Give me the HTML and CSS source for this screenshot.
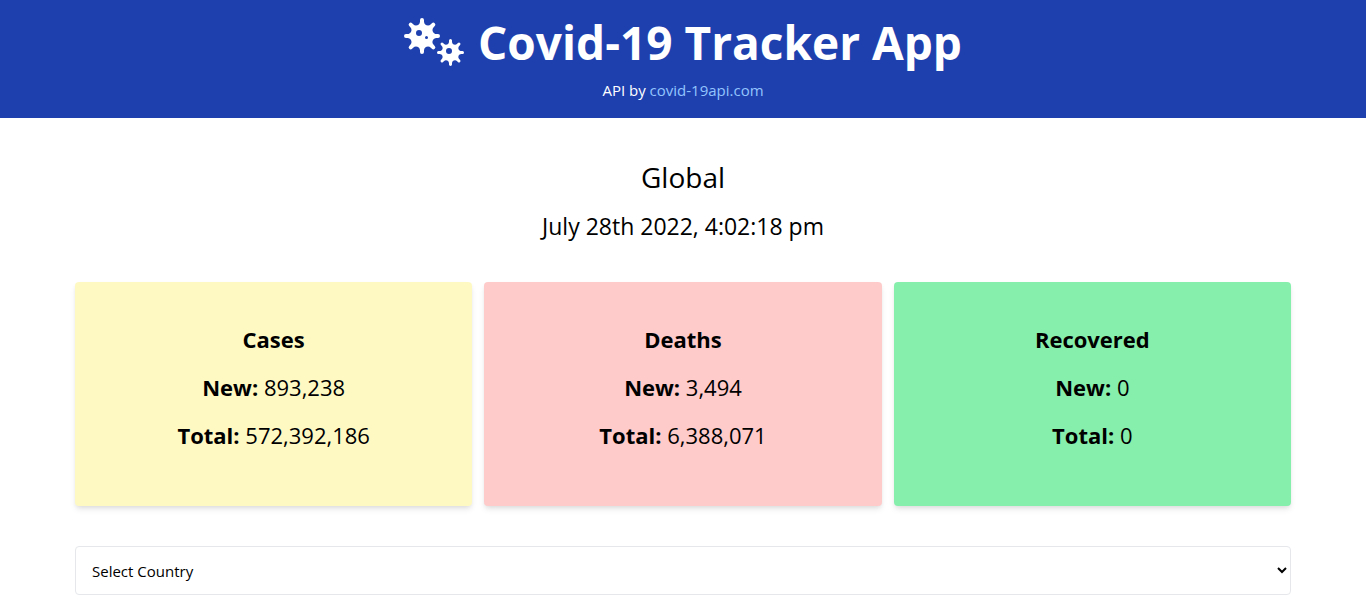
FILE: index.html
```html
<!DOCTYPE html>
<html lang="en">
<head>
<meta charset="utf-8">
<meta name="viewport" content="width=device-width, initial-scale=1">
<title>Covid-19 Tracker App</title>
<link rel="stylesheet" href="styles.css">
</head>
<body>
<header class="header">
  <h1 class="title">
    <svg class="title-icon" viewBox="0 0 640 512" aria-hidden="true"><path fill="currentColor" d="M624,352H611.88c-28.51,0-42.79-34.47-22.63-54.63l8.58-8.57a16,16,0,1,0-22.63-22.63l-8.57,8.58C546.47,294.91,512,280.63,512,252.12V240a16,16,0,0,0-32,0v12.12c0,28.51-34.47,42.79-54.63,22.63l-8.57-8.58a16,16,0,0,0-22.63,22.63l8.58,8.57c20.16,20.16,5.88,54.63-22.63,54.63H368a16,16,0,0,0,0,32h12.12c28.51,0,42.79,34.47,22.63,54.63l-8.58,8.57a16,16,0,1,0,22.63,22.63l8.57-8.58c20.16-20.16,54.63-5.88,54.63,22.63V496a16,16,0,0,0,32,0V483.88c0-28.51,34.47-42.79,54.63-22.63l8.57,8.58a16,16,0,1,0,22.63-22.63l-8.58-8.57C569.09,418.47,583.37,384,611.88,384H624a16,16,0,0,0,0-32ZM480,384a32,32,0,1,1,32-32A32,32,0,0,1,480,384ZM346.51,213.33h16.16a21.33,21.33,0,0,0,0-42.66H346.51c-38,0-57.05-46-30.17-72.84l11.43-11.44A21.33,21.33,0,0,0,297.6,56.23L286.17,67.66c-26.88,26.88-72.84,7.85-72.84-30.17V21.33a21.33,21.33,0,0,0-42.66,0V37.49c0,38-46,57.05-72.84,30.17L86.4,56.23A21.33,21.33,0,0,0,56.23,86.39L67.66,97.83c26.88,26.88,7.85,72.84-30.17,72.84H21.33a21.33,21.33,0,0,0,0,42.66H37.49c38,0,57.05,46,30.17,72.84L56.23,297.6A21.33,21.33,0,1,0,86.4,327.77l11.43-11.43c26.88-26.88,72.84-7.85,72.84,30.17v16.16a21.33,21.33,0,0,0,42.66,0V346.51c0-38,46-57.05,72.84-30.17l11.43,11.43a21.33,21.33,0,0,0,30.17-30.17l-11.43-11.43C289.46,259.29,308.49,213.33,346.51,213.33ZM160,192a32,32,0,1,1,32-32A32,32,0,0,1,160,192Zm80,32a16,16,0,1,1,16-16A16,16,0,0,1,240,224Z"/></svg>
    Covid-19 Tracker App
  </h1>
  <p class="credit">API by <a class="credit-link" href="#">covid-19api.com</a></p>
</header>
<main class="container">
  <section class="summary">
    <h2 class="region">Global</h2>
    <p class="date">July 28th 2022, 4:02:18 pm</p>
  </section>
  <section class="cards">
    <article class="card card-cases">
      <h3 class="card-title">Cases</h3>
      <p class="stat"><strong class="label">New:</strong> 893,238</p>
      <p class="stat"><strong class="label">Total:</strong> 572,392,186</p>
    </article>
    <article class="card card-deaths">
      <h3 class="card-title">Deaths</h3>
      <p class="stat"><strong class="label">New:</strong> 3,494</p>
      <p class="stat"><strong class="label">Total:</strong> 6,388,071</p>
    </article>
    <article class="card card-recovered">
      <h3 class="card-title">Recovered</h3>
      <p class="stat"><strong class="label">New:</strong> 0</p>
      <p class="stat"><strong class="label">Total:</strong> 0</p>
    </article>
  </section>
  <select class="country" aria-label="Select Country">
    <option>Select Country</option>
  </select>
</main>
</body>
</html>
```

FILE: styles.css
```css
* {
  box-sizing: border-box;
}

body {
  margin: 0;
  background: #fff;
  color: #000;
  font-family: "Open Sans", "Noto Sans", sans-serif;
  font-size: 15px;
  line-height: 24px;
}

h1, h2, h3, p {
  margin: 0;
}

.header {
  padding: 16px;
  background: #1e40af;
  color: #fff;
  text-align: center;
}

.title {
  display: flex;
  align-items: center;
  justify-content: center;
  gap: 14px;
  margin-bottom: 10px;
  font-size: 46px;
  font-weight: 700;
  line-height: 52px;
}

.title-icon {
  width: 60px;
  height: 48px;
}

.credit-link {
  color: #93c5fd;
  text-decoration: none;
}

.container {
  max-width: 1280px;
  margin: 0 auto;
  padding: 40px 32px 5px;
}

.summary {
  margin-bottom: 40px;
  text-align: center;
}

.region {
  margin-bottom: 14px;
  font-size: 28px;
  font-weight: 400;
  line-height: 38px;
}

.date {
  font-size: 23px;
  line-height: 32px;
}

.cards {
  display: grid;
  grid-template-columns: repeat(3, 1fr);
  gap: 12px;
  margin-bottom: 40px;
}

.card {
  display: flex;
  flex-direction: column;
  gap: 16px;
  padding: 41px 40px 55px;
  border-radius: 4px;
  box-shadow: 0 4px 6px -1px rgba(0, 0, 0, 0.1), 0 2px 4px -1px rgba(0, 0, 0, 0.06);
  font-size: 22px;
  line-height: 32px;
  text-align: center;
}

.card-cases {
  background: #fef9c3;
}

.card-deaths {
  background: #fecaca;
}

.card-recovered {
  background: #86efac;
}

.card-title {
  font-size: 22px;
  font-weight: 700;
}

.label {
  font-weight: 700;
}

.country {
  display: block;
  width: 100%;
  height: 49px;
  padding: 12px;
  border: 1px solid #e5e7eb;
  border-radius: 4px;
  background: #fff;
  color: #000;
  font-family: inherit;
  font-size: 15px;
}
```
